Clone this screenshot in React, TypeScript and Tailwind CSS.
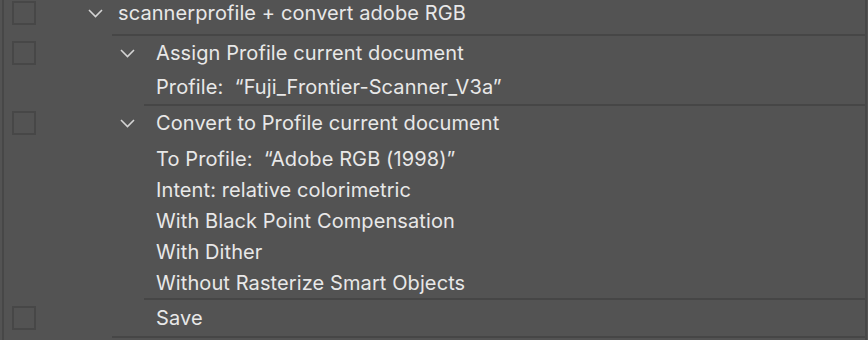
import React from "react";

const Chevron = () => (
  <svg width="15" height="9" viewBox="0 0 15 9" className="shrink-0">
    <polyline points="1,1 7.5,7.5 14,1" fill="none" stroke="#d4d4d4" strokeWidth="1.6" />
  </svg>
);

const Box = () => <div className="w-[24px] h-[24px] border-2 border-[#474747] shrink-0" />;

const Divider = ({ left }: { left: string }) => (
  <div className={`h-[2px] bg-[#464646] ${left}`} />
);

const Header = ({
  text,
  indent,
  chevron = true,
  h = "h-[34px]",
  extra = "",
}: {
  text: string;
  indent: boolean;
  chevron?: boolean;
  h?: string;
  extra?: string;
}) => (
  <div className={`flex items-center ${h} ${extra}`}>
    <div className="w-[84px] pl-[8px] shrink-0 flex items-center">
      <Box />
    </div>
    {indent ? <div className="w-[32px] shrink-0" /> : null}
    <div className={`${indent ? "w-[36px]" : "w-[30px]"} shrink-0 flex items-center`}>
      {chevron ? <Chevron /> : null}
    </div>
    <span className="whitespace-pre">{text}</span>
  </div>
);

const Detail = ({ text, h = "h-[31px]" }: { text: string; h?: string }) => (
  <div className={`flex items-center ${h} pl-[152px] whitespace-pre`}>{text}</div>
);

export default function App() {
  return (
    <div
      className="w-[868px] h-[340px] bg-[#535353] overflow-hidden text-[20px] tracking-[0.005em] text-[#e8e8e8]"
      style={{ fontFamily: "Inter, 'Liberation Sans', sans-serif" }}
    >
      <div className="ml-[2px] w-[865px] h-[340px] border-l-2 border-r-2 border-[#474747] flex flex-col">
        <Header text="scannerprofile + convert adobe RGB" indent={false} extra="pb-[8px]" />
        <Divider left="ml-[108px]" />
        <Header text="Assign Profile current document" indent={true} />
        <Detail text="Profile:  “Fuji_Frontier-Scanner_V3a”" h="h-[34px]" />
        <Divider left="ml-[140px]" />
        <Header text="Convert to Profile current document" indent={true} />
        <div className="pt-[3px] flex flex-col">
          <Detail text="To Profile:  “Adobe RGB (1998)”" />
          <Detail text="Intent: relative colorimetric" />
          <Detail text="With Black Point Compensation" />
          <Detail text="With Dither" />
          <Detail text="Without Rasterize Smart Objects" />
        </div>
        <Divider left="ml-[140px]" />
        <Header text="Save" indent={true} chevron={false} h="h-[36px]" />
        <Divider left="ml-[108px]" />
      </div>
    </div>
  );
}
